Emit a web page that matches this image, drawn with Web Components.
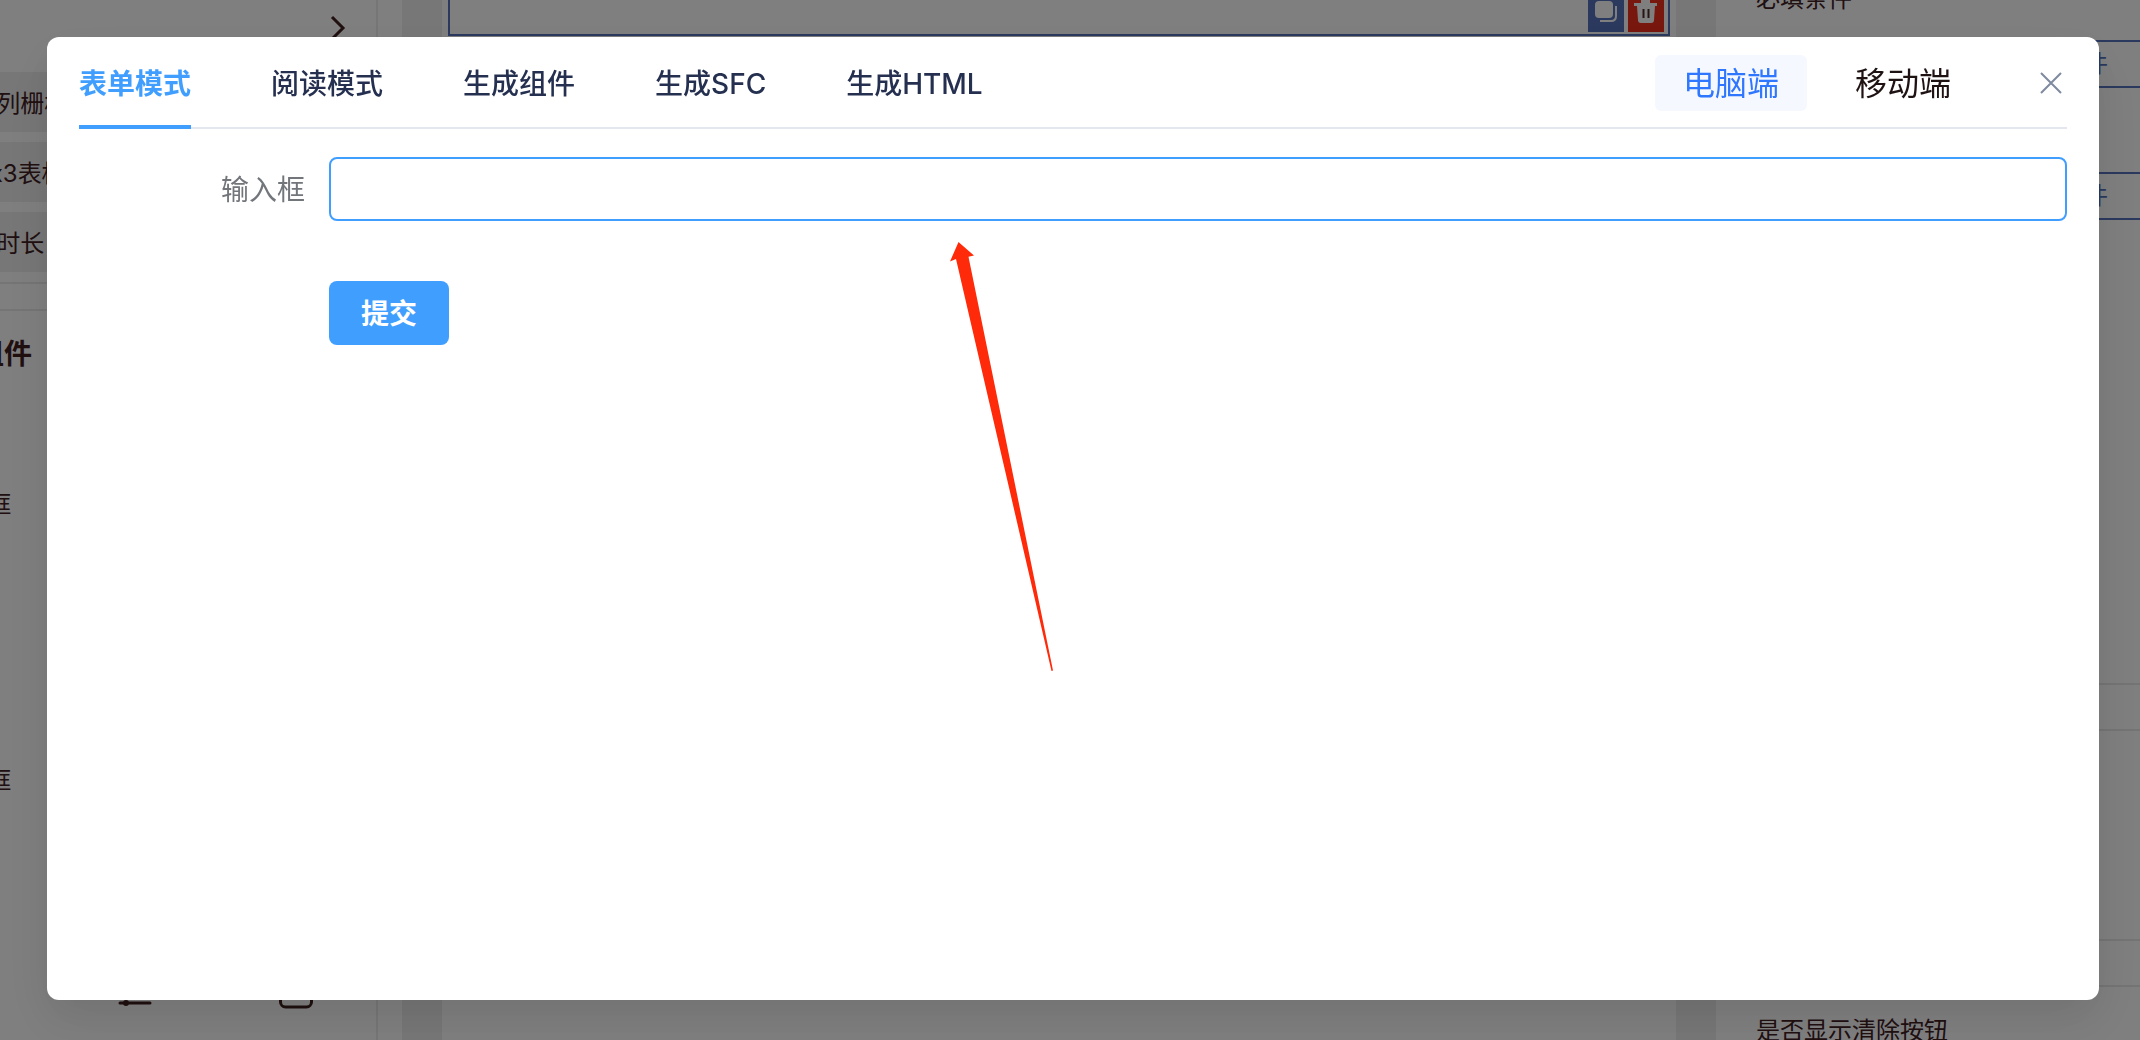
<!DOCTYPE html>
<html lang="zh-CN">
<head>
<meta charset="utf-8">
<title>表单设计器</title>
<style>
html, body { margin: 0; height: 100%; overflow: hidden; }
body { font-family: Inter, "Noto Sans CJK SC", sans-serif; font-variant-ligatures: no-contextual; color: #40201f; background: #fff; }
</style>
</head>
<body>
<form-designer></form-designer>
<script>
const base = `
  :host, *, *::before, *::after { box-sizing: border-box; }
  button, input { font: inherit; font-variant-ligatures: inherit; color: inherit; margin: 0; padding: 0; border: 0; background: none; outline: none; }
  svg { display: block; }
`;
function define(name, html) {
  const t = document.createElement('template');
  t.innerHTML = html;
  customElements.define(name, class extends HTMLElement {
    constructor() {
      super();
      this.attachShadow({ mode: 'open' }).append(t.content.cloneNode(true));
    }
  });
}

define('palette-card', `<style>${base}
  :host { display: block; grid-column: 1; }
  button { display: block; width: 100%; height: 60px; padding-top: 4px; background: #efefef; font-size: 24px; line-height: 36px; font-variant-ligatures: no-contextual; white-space: nowrap; }
</style><button type="button"><slot></slot></button>`);

define('palette-cell', `<style>${base}
  :host { display: flex; grid-column: 1; flex-direction: column; align-items: center; height: 276px; padding-top: 90px; font-size: 24px; line-height: 36px; }
</style><slot></slot>`);

define('component-palette', `<style>${base}
  :host { display: block; width: 507px; margin-left: -105px; padding-right: 24px; flex: none; background: #fff; }
  .inner { height: 100%; border-right: 2px solid #ececec; overflow: hidden; }
  header { display: flex; justify-content: flex-end; height: 72px; padding: 14px 30px 0 0; }
  header button { width: 16px; height: 28px; }
  .cards { display: grid; grid-template-columns: repeat(2, 1fr); gap: 10px 28px; padding: 0 24px 10px; }
  .edge { height: 29px; border: solid #ebebeb; border-width: 2px 0; }
  h2 { margin: 0; height: 86px; padding-left: 25px; font-size: 28px; line-height: 86px; font-weight: 700; }
  .cells { display: grid; grid-template-columns: repeat(3, 1fr); }
  .icons { display: grid; grid-template-columns: repeat(3, 1fr); justify-items: center; padding-top: 27px; }
</style>
<div class="inner">
  <header><button type="button" aria-label="展开"><svg width="16" height="28" viewBox="0 0 16 28" fill="none" stroke="#40201f" stroke-width="3"><path d="M2 3l11 11L2 25"/></svg></button></header>
  <div class="cards">
    <palette-card>一列栅格</palette-card>
    <palette-card>3x3表格</palette-card>
    <palette-card>时长</palette-card>
  </div>
  <div class="edge"></div>
  <h2>基础组件</h2>
  <div class="cells">
    <palette-cell>输入框</palette-cell>
    <palette-cell>密码框</palette-cell>
  </div>
  <div class="icons">
    <span></span>
    <svg width="36" height="36" viewBox="0 0 36 36" fill="none" stroke="#40201f" stroke-width="3" stroke-linecap="round"><path d="M3 5h30M3 16h30M3 27h30"/><circle cx="24" cy="5" r="2"/><circle cx="9" cy="27" r="1.500"/></svg>
    <svg width="36" height="36" viewBox="0 0 36 36" fill="none" stroke="#40201f" stroke-width="3"><rect x="2.500" y="2" width="31" height="29" rx="5"/></svg>
  </div>
</div>`);

/* Centre canvas with the selected widget and its two tools */
define('form-canvas', `<style>${base}
  :host { display: block; flex: 1; min-width: 0; padding: 0 40px; background: #eeeeee; }
  .sheet { height: 100%; padding: 0 6px; background: #fff; }
  .selected { display: flex; justify-content: flex-end; align-items: flex-end; gap: 4px; height: 36px; padding: 0 4px 2px 0; border: solid #5672bc; border-width: 0 2px 2px; }
  button { width: 36px; height: 32px; flex: none; }
  .copy { background: #5672bc; }
  .del { background: #f02e1c; }
</style>
<div class="sheet"><div class="selected">
  <button type="button" class="copy" aria-label="复制"><svg width="36" height="32" viewBox="0 0 36 32"><rect x="7" y="1" width="18" height="17" rx="4" fill="#fff"/><path d="M28 6v10q0 5-5 5H12" fill="none" stroke="#fff" stroke-width="2"/></svg></button>
  <button type="button" class="del" aria-label="删除"><svg width="36" height="32" viewBox="0 0 36 32"><path d="M13 0h9v3h7v3h-2l-1 14q0 3-3 3H13q-3 0-3-3L9 6H6V3h7z" fill="#fff"/><path d="M15.500 9v9M20.500 9v9" stroke="#502a2c" stroke-width="2"/></svg></button>
</div></div>`);

/* Right-hand settings */
define('event-button', `<style>${base}
  :host { display: block; }
  button { display: block; width: 100%; height: 48px; padding-right: 32px; border: 2px solid #5672bc; border-right: 0; color: #5672bc; font-size: 24px; line-height: 36px; text-align: right; }
</style><button type="button"><slot></slot></button>`);

define('setting-input', `<style>${base}
  :host { display: block; }
  input { display: block; width: 100%; height: 48px; border: solid #e8e8e8; border-width: 2px 0; }
</style><input type="text" aria-label="设置值">`);

define('property-panel', `<style>${base}
  :host { display: flex; flex-direction: column; width: 424px; flex: none; padding-left: 40px; background: #fff; font-size: 24px; line-height: 48px; }
  .label { flex: none; height: 48px; padding-top: 1px; white-space: nowrap; }
  .first { margin-top: -26px; }
  .group { flex: none; padding-top: 18px; }
  .group > * + * { margin-top: 84px; }
  .inputs { flex: none; padding: 463px 0 19px; }
  .inputs > * + * { margin-top: 208px; }
</style>
<div class="label first">必填条件</div>
<div class="group"><event-button>编写事件</event-button><event-button>编写事件</event-button></div>
<div class="inputs"><setting-input></setting-input><setting-input></setting-input></div>
<div class="label">是否显示清除按钮</div>`);

/* Preview dialog */
define('mode-tab', `<style>${base}
  :host { display: block; }
  button { display: block; height: 92px; padding-top: 2px; font-size: 28px; line-height: 90px; font-weight: 500; color: #253050; white-space: nowrap; }
  :host([active]) button { color: #409eff; font-weight: 700; box-shadow: inset 0 -4px #409eff; }
</style><button type="button"><slot></slot></button>`);

define('device-option', `<style>${base}
  :host { display: block; }
  button { display: block; height: 56px; padding: 2px 28px 0; border-radius: 6px; font-size: 32px; line-height: 54px; color: #1f1213; white-space: nowrap; }
  :host([active]) button { background: #f5f8ff; color: #2f77ff; }
</style><button type="button"><slot></slot></button>`);

define('preview-form', `<style>${base}
  :host { display: block; }
  form { display: grid; grid-template-columns: 226px 1fr; column-gap: 24px; row-gap: 60px; padding-top: 28px; font-size: 28px; line-height: 62px; }
  label { height: 64px; padding-top: 2px; color: #72767b; text-align: right; }
  input { width: 100%; height: 64px; padding: 0 22px; border: 2px solid #409eff; border-radius: 8px; background: #fff; color: #303133; }
  button { grid-column: 2; justify-self: start; height: 64px; padding: 2px 32px 0; border-radius: 8px; background: #409eff; color: #fff; font-weight: 700; }
</style>
<form><label for="field">输入框</label><input id="field" type="text"><button type="button">提交</button></form>`);

define('pointer-arrow', `<style>
  :host { position: absolute; left: 902px; top: 204px; }
  svg { display: block; }
</style>
<svg width="106" height="432" viewBox="0 0 106 432" aria-hidden="true"><path d="M9.500 1L25 14.500l-5.500 1.200L104 429.500l-1.500.500L7 18 1 20.500z" fill="#ff2a0a"/></svg>`);

define('preview-dialog', `<style>${base}
  :host { position: fixed; inset: 0; display: flex; padding: 37px 41px 40px 47px; background: rgba(0,0,0,.5); }
  section { position: relative; flex: 1; min-width: 0; padding: 0 32px; border-radius: 12px; background: #fff; box-shadow: 0 24px 64px 8px rgba(0,0,0,.04), 0 16px 40px rgba(0,0,0,.08); }
  header { display: flex; align-items: center; height: 92px; box-shadow: inset 0 -2px #e4e7ed; }
  nav { display: flex; gap: 80px; margin-right: auto; }
  .devices { display: flex; gap: 20px; margin-right: 56px; }
  .close { display: flex; align-items: center; justify-content: center; width: 32px; height: 32px; }
</style>
<section role="dialog" aria-label="预览">
  <header>
    <nav><mode-tab active>表单模式</mode-tab><mode-tab>阅读模式</mode-tab><mode-tab>生成组件</mode-tab><mode-tab>生成SFC</mode-tab><mode-tab>生成HTML</mode-tab></nav>
    <div class="devices"><device-option active>电脑端</device-option><device-option>移动端</device-option></div>
    <button type="button" class="close" aria-label="关闭"><svg width="22" height="22" viewBox="0 0 22 22" fill="none" stroke="#7f89a0" stroke-width="2"><path d="M1 1l20 20M21 1L1 21"/></svg></button>
  </header>
  <preview-form></preview-form>
  <pointer-arrow></pointer-arrow>
</section>`);

define('form-designer', `<style>
  :host { display: flex; height: 100vh; overflow: hidden; }
</style>
<component-palette></component-palette><form-canvas></form-canvas><property-panel></property-panel>
<preview-dialog></preview-dialog>`);
</script>
</body>
</html>
